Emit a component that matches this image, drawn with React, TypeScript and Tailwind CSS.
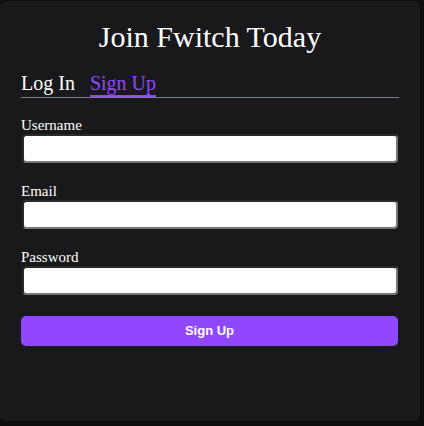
import { useState } from 'react';

const serif = "font-['Liberation_Serif','Times_New_Roman',serif]";

function Field({ id, label, type = 'text' }: { id: string; label: string; type?: string }) {
  return (
    <div className="flex flex-col">
      <label htmlFor={id} className="text-[15px] leading-[17px] text-white">
        {label}
      </label>
      <input
        id={id}
        type={type}
        className="ml-px h-[29px] w-[376px] rounded-[4px] border-2 border-t-[#2a2a2a] border-l-[#2a2a2a] border-r-[#767676] border-b-[#767676] bg-white px-2 text-[15px] text-black outline-none"
      />
    </div>
  );
}

export default function App() {
  const [tab, setTab] = useState<'login' | 'signup'>('signup');

  return (
    <div className="h-[426px] w-[424px] bg-[#0d0d0f] pt-px">
      <div className={`${serif} flex h-[420px] w-[420px] flex-col rounded-[6px] bg-[#19191b] px-[21px] pt-[19px]`}>
        <h1 className="text-center text-[30px] leading-[34px] text-white">Join Fwitch Today</h1>

        <div className="mt-[18px] flex gap-[15px] border-b border-[#7a8089]">
          <button
            onClick={() => setTab('login')}
            className={`border-b-2 text-[20px] leading-[23px] ${
              tab === 'login' ? 'border-[#9147ff] text-[#9147ff]' : 'border-transparent text-white'
            }`}
          >
            Log In
          </button>
          <button
            onClick={() => setTab('signup')}
            className={`border-b-2 text-[20px] leading-[23px] ${
              tab === 'signup' ? 'border-[#9147ff] text-[#9147ff]' : 'border-transparent text-white'
            }`}
          >
            Sign Up
          </button>
        </div>

        <form className="mt-[19px] flex flex-col gap-[20px]" onSubmit={(e) => e.preventDefault()}>
          <Field id="username" label="Username" />
          <Field id="email" label="Email" type="email" />
          <Field id="password" label="Password" type="password" />
          <button
            type="submit"
            className="mt-px h-[30px] w-[377px] rounded-[5px] bg-[#9147ff] font-['Liberation_Sans',Arial,sans-serif] text-[13px] font-bold text-white"
          >
            Sign Up
          </button>
        </form>
      </div>
    </div>
  );
}
